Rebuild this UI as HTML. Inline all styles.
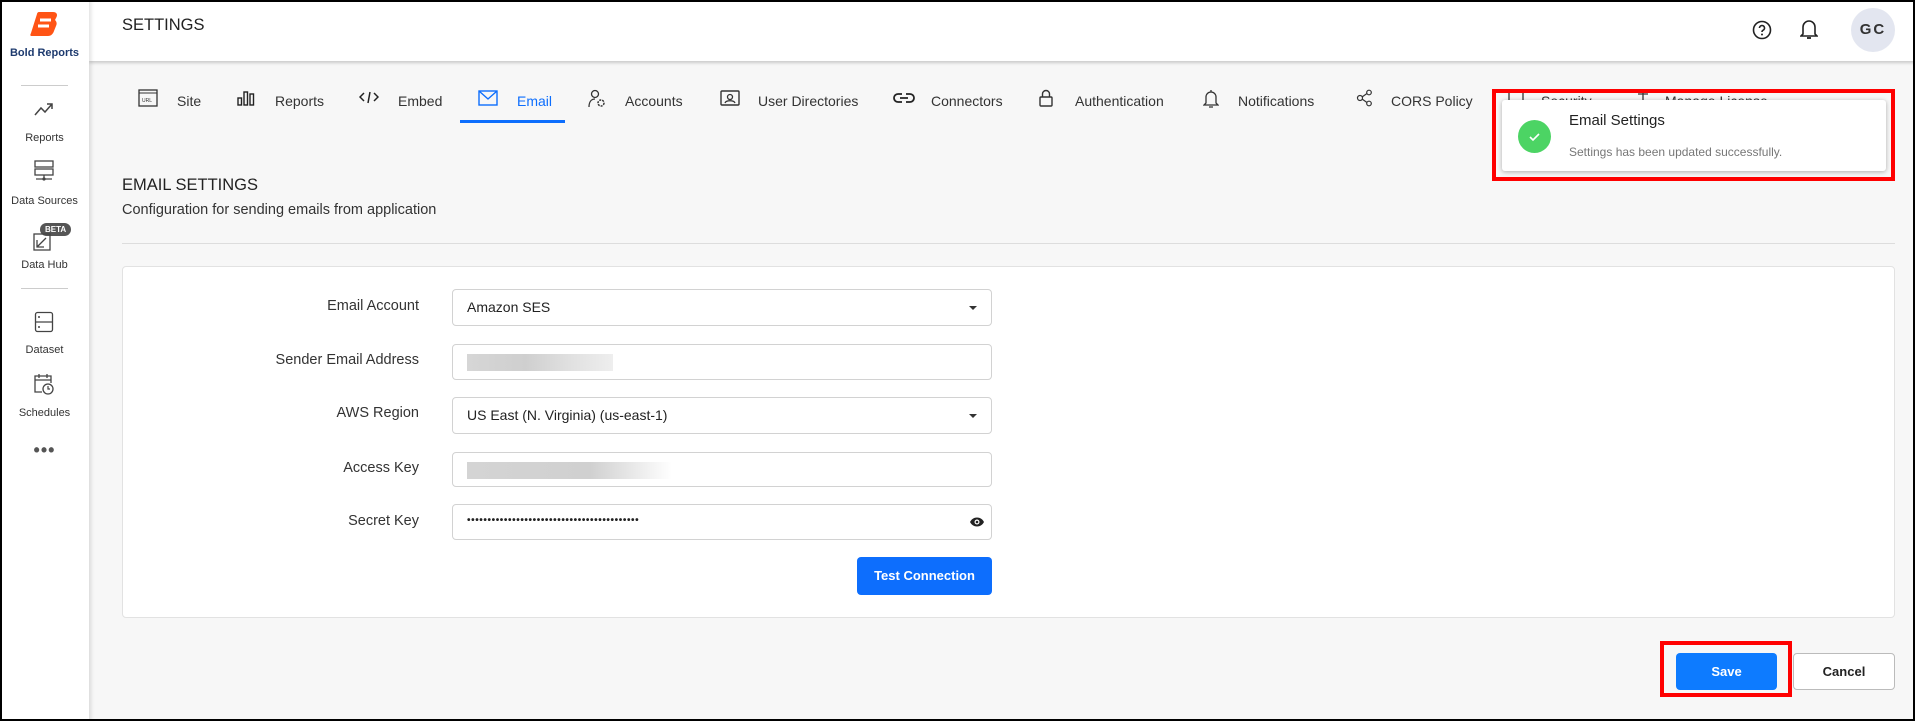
<!DOCTYPE html>
<html><head><meta charset="utf-8"><style>
*{box-sizing:border-box;margin:0;padding:0}
body{width:1915px;height:721px;overflow:hidden;font-family:"Liberation Sans",sans-serif;background:#f7f7f7;position:relative;color:#222}
.frame{position:absolute;left:0;top:0;width:1915px;height:721px;border:2px solid #000;pointer-events:none;z-index:50}
.side{position:absolute;left:0;top:0;width:89px;height:721px;background:#fff;box-shadow:2px 0 4px rgba(0,0,0,.12);z-index:5}
.side .lbl{position:absolute;width:89px;text-align:center;font-size:11px;color:#333}
.side .div{position:absolute;left:21px;width:47px;height:1px;background:#ccc}
.side svg{position:absolute}
.hdr{position:absolute;left:89px;top:0;right:0;height:61px;background:#fff;box-shadow:0 2px 3px rgba(0,0,0,.18);z-index:4}
.abs{position:absolute}
.tab{position:absolute;top:93px;font-size:14px;color:#333}
.tab svg{position:absolute;top:-4px}
.card{position:absolute;left:122px;top:266px;width:1773px;height:352px;background:#fff;border:1px solid #e2e2e2;border-radius:4px}
.label{position:absolute;right:1496px;font-size:14.5px;color:#333;text-align:right}
.inp{position:absolute;left:452px;width:540px;border:1px solid #d2d2d2;border-radius:4px;background:#fff;font-size:14px;color:#222;padding-left:14px}
.blur{position:absolute;left:14px;height:17px;top:9px;background:linear-gradient(90deg,#d6d6d6,#cfcfcf 40%,#e0e0e0 70%,#eee)}
.caret{position:absolute;right:14px;top:50%;margin-top:-2px;border-left:4px solid transparent;border-right:4px solid transparent;border-top:4px solid #333}
.btn{position:absolute;border-radius:4px;font-size:13px;font-weight:bold;text-align:center}
</style></head><body>
<div class="frame"></div>
<div class="side">
 <svg style="left:30px;top:11px" width="28" height="26" viewBox="0 0 28 26"><path d="M9 1h14c4 0 5 3 3 6l-1 2c2 2 2 4 1 6l-2 5c-1 3-3 5-6 5H2c-2 0-2-1-1-3L7 3c0-1 1-2 2-2z" fill="#ff5415"/><path d="M10 9h11M8 15h11" stroke="#fff" stroke-width="3"/></svg>
 <div class="lbl" style="top:47px;font-weight:bold;color:#1d3a6e;font-size:11px">Bold Reports</div>
 <div class="div" style="top:85px"></div>
 <svg style="left:33px;top:100px" width="22" height="18" viewBox="0 0 22 18"><path d="M2 15l6-7 4 4 7-8M14 4h5v5" fill="none" stroke="#444" stroke-width="1.5"/></svg>
 <div class="lbl" style="top:132px">Reports</div>
 <svg style="left:34px;top:160px" width="20" height="22" viewBox="0 0 20 22"><rect x="1" y="1" width="18" height="6" fill="none" stroke="#444" stroke-width="1.3"/><rect x="1" y="9" width="18" height="6" fill="none" stroke="#444" stroke-width="1.3"/><path d="M10 15v4M2 19h16" stroke="#444" stroke-width="1.3"/><circle cx="10" cy="19" r="1.6" fill="#444"/></svg>
 <div class="lbl" style="top:195px">Data Sources</div>
 <div class="abs" style="left:40px;top:223px;background:#555;color:#fff;font-size:8px;font-weight:bold;border-radius:7px;padding:2px 5px">BETA</div>
 <svg style="left:33px;top:233px" width="18" height="18" viewBox="0 0 18 18"><rect x="1" y="1" width="16" height="16" fill="none" stroke="#444" stroke-width="1.3"/><path d="M4 14l9-9M4 7v7h7" fill="none" stroke="#444" stroke-width="1.3"/></svg>
 <div class="lbl" style="top:259px">Data Hub</div>
 <div class="div" style="top:288px"></div>
 <svg style="left:34px;top:311px" width="20" height="22" viewBox="0 0 20 22"><rect x="1.5" y="1.5" width="17" height="19" rx="2" fill="none" stroke="#444" stroke-width="1.3"/><path d="M1.5 11h17" stroke="#444" stroke-width="1.3"/><circle cx="5" cy="6" r="1" fill="#444"/><circle cx="5" cy="16" r="1" fill="#444"/></svg>
 <div class="lbl" style="top:344px">Dataset</div>
 <svg style="left:33px;top:372px" width="22" height="24" viewBox="0 0 22 24"><path d="M9 20H2V4h16v7M2 8h16M6 2v4M14 2v4" fill="none" stroke="#444" stroke-width="1.3"/><circle cx="15" cy="17" r="5" fill="none" stroke="#444" stroke-width="1.3"/><path d="M15 14v3h2" fill="none" stroke="#444" stroke-width="1.2"/></svg>
 <div class="lbl" style="top:407px">Schedules</div>
 <div class="lbl" style="top:440px;font-size:18px;font-weight:bold;letter-spacing:1px;color:#555">•••</div>
</div>
<div class="hdr">
 <div class="abs" style="left:33px;top:16px;font-size:16.5px;color:#222">SETTINGS</div>
 <svg class="abs" style="left:1663px;top:20px" width="20" height="20" viewBox="0 0 20 20"><circle cx="10" cy="10" r="8.5" fill="none" stroke="#222" stroke-width="1.6"/><path d="M7.5 8a2.5 2.5 0 1 1 3.5 2.3c-.8.4-1 .8-1 1.7" fill="none" stroke="#222" stroke-width="1.6"/><circle cx="10" cy="14.5" r="1" fill="#222"/></svg>
 <svg class="abs" style="left:1711px;top:18px" width="18" height="22" viewBox="0 0 18 22"><path d="M3 16V9a6 6 0 0 1 12 0v7l2 2H1z" fill="none" stroke="#222" stroke-width="1.6"/><path d="M7 20h4" stroke="#222" stroke-width="1.8"/></svg>
 <div class="abs" style="left:1762px;top:8px;width:44px;height:44px;border-radius:50%;background:#e3e6f0;font-size:15px;font-weight:bold;color:#333;text-align:center;line-height:44px;letter-spacing:2px">GC</div>
</div>
<div class="tab" style="left:138px"><svg width="20" height="18" viewBox="0 0 20 18"><rect x="1" y="1" width="18" height="16" fill="none" stroke="#333" stroke-width="1.3"/><path d="M1 4h18" stroke="#333"/><text x="4" y="13" font-size="5" font-family="Liberation Sans" fill="#333">URL</text></svg></div>
<div class="tab" style="left:177px">Site</div>
<div class="tab" style="left:237px"><svg width="18" height="18" viewBox="0 0 18 18"><rect x="1" y="9" width="3.5" height="7" fill="none" stroke="#222" stroke-width="1.4"/><rect x="7" y="3" width="3.5" height="13" fill="none" stroke="#222" stroke-width="1.4"/><rect x="13" y="5" width="3.5" height="11" fill="none" stroke="#222" stroke-width="1.4"/></svg></div>
<div class="tab" style="left:275px">Reports</div>
<div class="tab" style="left:359px"><svg width="20" height="18" viewBox="0 0 20 18"><path d="M5 4L1 8l4 4M15 4l4 4-4 4M11 3l-2 11" fill="none" stroke="#222" stroke-width="1.5"/></svg></div>
<div class="tab" style="left:398px">Embed</div>
<div class="tab" style="left:478px"><svg width="20" height="18" viewBox="0 0 20 18"><rect x="1" y="2" width="18" height="14" fill="none" stroke="#0d6efd" stroke-width="1.4"/><path d="M1 2l9 8 9-8" fill="none" stroke="#0d6efd" stroke-width="1.4"/></svg></div>
<div class="tab" style="left:517px;color:#0d6efd">Email</div>
<div class="abs" style="left:460px;top:120px;width:105px;height:3px;background:#0d6efd"></div>
<div class="tab" style="left:587px"><svg width="20" height="20" viewBox="0 0 20 20"><circle cx="8" cy="5" r="3.5" fill="none" stroke="#333" stroke-width="1.3"/><path d="M2 18c0-6 3-8 6-8" fill="none" stroke="#333" stroke-width="1.3"/><circle cx="14" cy="14" r="3" fill="none" stroke="#333" stroke-width="1.5" stroke-dasharray="2 1"/></svg></div>
<div class="tab" style="left:625px">Accounts</div>
<div class="tab" style="left:720px"><svg width="20" height="18" viewBox="0 0 20 18"><rect x="1" y="2" width="18" height="14" rx="1" fill="none" stroke="#333" stroke-width="1.4"/><circle cx="10" cy="8" r="2.5" fill="none" stroke="#333" stroke-width="1.3"/><path d="M5 14c1-3 9-3 10 0" fill="none" stroke="#333" stroke-width="1.3"/></svg></div>
<div class="tab" style="left:758px">User Directories</div>
<div class="tab" style="left:893px"><svg width="22" height="18" viewBox="0 0 22 18"><path d="M9 5H5a4 4 0 0 0 0 8h4M13 5h4a4 4 0 0 1 0 8h-4M7 9h8" fill="none" stroke="#222" stroke-width="1.8"/></svg></div>
<div class="tab" style="left:931px">Connectors</div>
<div class="tab" style="left:1037px"><svg width="18" height="18" viewBox="0 0 18 18"><rect x="3" y="8" width="12" height="9" rx="1" fill="none" stroke="#333" stroke-width="1.4"/><path d="M5.5 8V5a3.5 3.5 0 0 1 7 0v3" fill="none" stroke="#333" stroke-width="1.4"/></svg></div>
<div class="tab" style="left:1075px">Authentication</div>
<div class="tab" style="left:1203px"><svg width="16" height="20" viewBox="0 0 16 20"><path d="M3 14V8a5 5 0 0 1 10 0v6l2 2H1zM8 1v2M6 18h4" fill="none" stroke="#333" stroke-width="1.3"/></svg></div>
<div class="tab" style="left:1238px">Notifications</div>
<div class="tab" style="left:1356px"><svg width="18" height="18" viewBox="0 0 18 18"><circle cx="4" cy="9" r="2.5" fill="none" stroke="#333" stroke-width="1.2"/><circle cx="13" cy="3.5" r="2.3" fill="none" stroke="#333" stroke-width="1.2"/><circle cx="13" cy="14.5" r="2.3" fill="none" stroke="#333" stroke-width="1.2"/><path d="M6 8l5-3.5M6 10l5 3.5" stroke="#333" stroke-width="1.2"/></svg></div>
<div class="tab" style="left:1391px">CORS Policy</div>
<div class="tab" style="left:1508px"><svg width="16" height="18" viewBox="0 0 16 18"><rect x="1" y="2" width="14" height="15" fill="none" stroke="#333" stroke-width="1.3"/></svg></div>
<div class="tab" style="left:1541px">Security</div>
<div class="tab" style="left:1634px"><svg width="18" height="18" viewBox="0 0 18 18"><path d="M9 1v16M4 5h10" stroke="#333" stroke-width="1.3"/></svg></div>
<div class="tab" style="left:1665px">Manage License</div>
<div class="abs" style="left:1492px;top:89px;width:403px;height:92px;border:4px solid #f00;z-index:6"></div>
<div class="abs" style="left:1502px;top:100px;width:384px;height:71px;background:#fff;border-radius:3px;box-shadow:0 1px 5px rgba(0,0,0,.3);z-index:7">
 <div class="abs" style="left:16px;top:20px;width:33px;height:33px;border-radius:50%;background:#4cd464"><svg width="33" height="33" viewBox="0 0 33 33"><path d="M12 17l3 3 6-6" fill="none" stroke="#fff" stroke-width="1.6"/></svg></div>
 <div class="abs" style="left:67px;top:12px;font-size:15px;color:#222">Email Settings</div>
 <div class="abs" style="left:67px;top:45px;font-size:12px;color:#777">Settings has been updated successfully.</div>
</div>
<div class="abs" style="left:122px;top:176px;font-size:16.5px;color:#222">EMAIL SETTINGS</div>
<div class="abs" style="left:122px;top:202px;font-size:14.5px;color:#333">Configuration for sending emails from application</div>
<div class="abs" style="left:122px;top:243px;width:1773px;height:1px;background:#ddd"></div>
<div class="card"></div>
<div class="label" style="top:298px">Email Account</div>
<div class="inp" style="top:289px;height:37px;line-height:35px">Amazon SES<div class="caret"></div></div>
<div class="label" style="top:352px">Sender Email Address</div>
<div class="inp" style="top:344px;height:36px"><div class="blur" style="width:146px"></div></div>
<div class="label" style="top:405px">AWS Region</div>
<div class="inp" style="top:397px;height:37px;line-height:35px">US East (N. Virginia) (us-east-1)<div class="caret"></div></div>
<div class="label" style="top:460px">Access Key</div>
<div class="inp" style="top:452px;height:35px"><div class="blur" style="width:205px;background:linear-gradient(90deg,#d4d4d4,#d0d0d0 60%,#fff)"></div></div>
<div class="label" style="top:513px">Secret Key</div>
<div class="inp" style="top:504px;height:36px;line-height:32px;font-size:10px;letter-spacing:0.6px;font-weight:bold">••••••••••••••••••••••••••••••••••••••••••
 <svg class="abs" style="right:6px;top:10px" width="16" height="14" viewBox="0 0 16 14"><path d="M1 7c3-6 11-6 14 0-3 6-11 6-14 0z" fill="#222"/><circle cx="8" cy="7" r="2.5" fill="#fff"/><circle cx="8" cy="7" r="1.3" fill="#222"/></svg></div>
<div class="btn" style="left:857px;top:557px;width:135px;height:38px;line-height:38px;background:#0d6efd;color:#fff">Test Connection</div>
<div class="abs" style="left:1660px;top:641px;width:132px;height:56px;border:4px solid #f00"></div>
<div class="btn" style="left:1676px;top:653px;width:101px;height:37px;line-height:37px;background:#0d7bff;color:#fff">Save</div>
<div class="btn" style="left:1793px;top:653px;width:102px;height:37px;line-height:35px;background:#fff;border:1px solid #bbb;color:#222">Cancel</div>
</body></html>
